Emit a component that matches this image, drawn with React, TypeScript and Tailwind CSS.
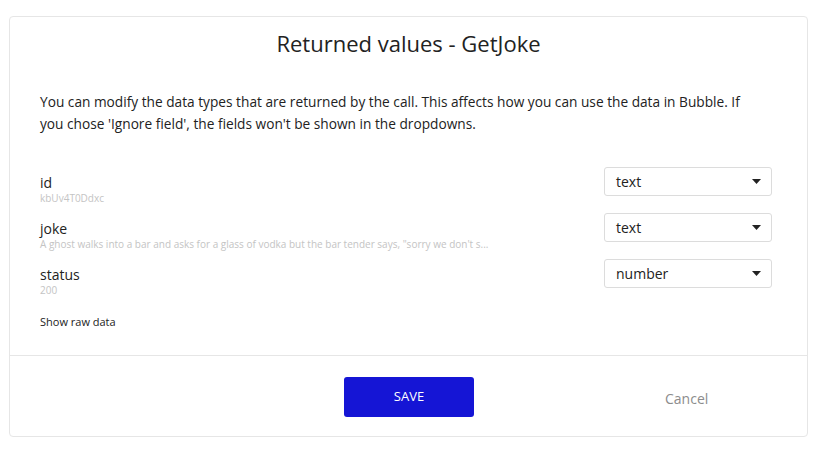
const fields = [
  { name: "id", sample: "kbUv4T0Ddxc", type: "text" },
  {
    name: "joke",
    sample:
      "A ghost walks into a bar and asks for a glass of vodka but the bar tender says, \"sorry we don't s...",
    type: "text",
  },
  { name: "status", sample: "200", type: "number" },
];

const Caret = () => (
  <svg width="9" height="5" viewBox="0 0 9 5" className="shrink-0">
    <path d="M0 0 L9 0 L4.5 5 Z" fill="#222" />
  </svg>
);

const App = () => {
  return (
    <div
      className="min-h-screen bg-white pt-4 pl-[9px] pr-2"
      style={{ fontFamily: '"Open Sans", sans-serif' }}
    >
      <div className="w-[799px] h-[421px] border border-[#e6e6e6] rounded flex flex-col">
        <h1 className="text-center text-[22px] text-[#222] pt-[12px] leading-[28px]">
          Returned values - GetJoke
        </h1>

        <div className="px-[30px] pt-[34px]">
          <p className="max-w-[722px] text-[13.7px] leading-[22px] text-[#222]">
            You can modify the data types that are returned by the call. This affects how you can use the data in
            Bubble. If you chose 'Ignore field', the fields won't be shown in the dropdowns.
          </p>

          <div className="mt-[32px] flex flex-col gap-[9px] pr-[5px]">
            {fields.map((f) => (
              <div key={f.name} className="flex items-start justify-between">
                <div className="w-[460px] pt-[7px]">
                  <div className="text-[14px] leading-[18px] text-[#222]">{f.name}</div>
                  <div className="text-[10px] leading-[12px] text-[#c4c4c4] whitespace-nowrap">{f.sample}</div>
                </div>
                <div className="w-[168px] h-[29px] border border-[#dcdcdc] rounded-[3px] flex items-center justify-between pl-[11px] pr-[10px]">
                  <span className="text-[14px] text-[#222]">{f.type}</span>
                  <Caret />
                </div>
              </div>
            ))}
          </div>

          <div className="mt-[18px] text-[11px] leading-[15px] text-[#222]">Show raw data</div>
        </div>

        <div className="mt-auto border-t border-[#e6e6e6] h-[81px] flex items-start pt-[21px]">
          <div className="flex items-center ml-[334px]">
            <button className="w-[130px] h-[40px] bg-[#1515d5] rounded-[3px] text-white text-[13px]">
              SAVE
            </button>
            <span className="ml-[191px] mt-[3px] text-[14px] text-[#8c8c8c]">Cancel</span>
          </div>
        </div>
      </div>
    </div>
  );
};

export default App;
